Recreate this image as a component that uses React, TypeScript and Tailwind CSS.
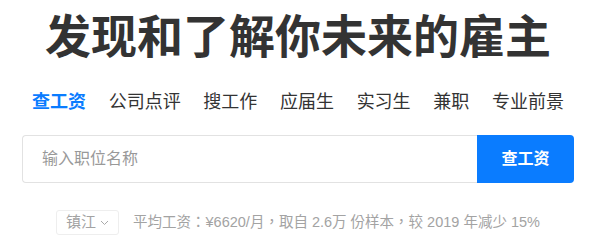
export default function App() {
  const tabs = ["公司点评", "搜工作", "应届生", "实习生", "兼职", "专业前景"];

  return (
    <div
      className="w-[600px] h-[251px] bg-white overflow-hidden"
      style={{ fontFamily: '"Liberation Sans", "Noto Sans CJK SC", sans-serif' }}
    >
      <div className="w-[552px] ml-[22px] pt-[14px] flex flex-col">
        {/* Heading */}
        <h1 className="text-center text-[46px] leading-[46px] font-bold text-[#333]">
          发现和了解你未来的雇主
        </h1>

        {/* Tabs */}
        <nav className="mt-[30px] px-[10px] flex justify-between text-[18px] leading-[24px] text-[#333]">
          <a className="text-[#0a7cff] font-bold">查工资</a>
          {tabs.map((t) => (
            <a key={t}>{t}</a>
          ))}
        </nav>

        {/* Search */}
        <div className="mt-[21px] flex h-[48px]">
          <div className="flex-1 flex items-center border border-r-0 border-[#e2e2e2] rounded-l-[4px] pl-[19px]">
            <input
              placeholder="输入职位名称"
              className="w-full outline-none text-[16px] text-[#333] placeholder:text-[#999]"
            />
          </div>
          <button className="w-[97px] bg-[#0a7cff] rounded-r-[4px] text-white text-[16px] font-bold">
            查工资
          </button>
        </div>

        {/* Summary */}
        <div className="mt-[27px] flex items-center justify-center text-[14.5px] text-[#a3a3a3]">
          <div className="h-[25px] flex items-center gap-[4px] pl-[9px] pr-[9px] border border-[#eee] rounded-[3px]">
            <span className="text-[15px]">镇江</span>
            <svg width="9" height="6" viewBox="0 0 9 6" fill="none">
              <path d="M1 1l3.5 3.5L8 1" stroke="#aaa" strokeWidth="1" />
            </svg>
          </div>
          <p
            className="ml-[14px]"
            style={{ fontFamily: '"Liberation Sans", "Noto Sans CJK TC", sans-serif' }}
          >
            平均工资：¥6620/月，取自 2.6万 份样本，较 2019 年减少 15%
          </p>
        </div>
      </div>
    </div>
  );
}
